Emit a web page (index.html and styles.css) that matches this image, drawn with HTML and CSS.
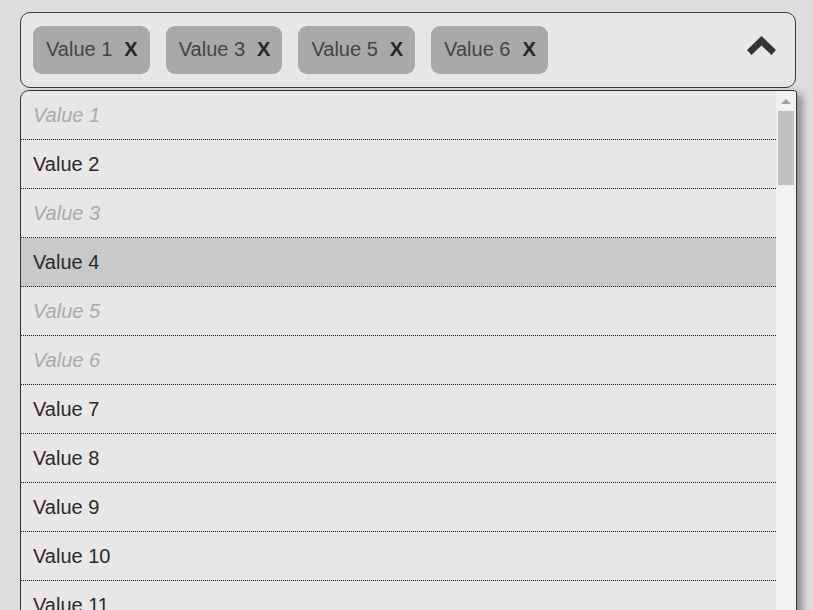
FILE: index.html
```html
<!DOCTYPE html>
<html lang="en">
<head>
<meta charset="utf-8">
<title>Multi select</title>
<link rel="stylesheet" href="styles.css">
</head>
<body>
<div class="page">
  <div class="select-box">
    <div class="chips">
      <span class="chip"><span class="chip-label">Value 1</span><span class="chip-x">X</span></span>
      <span class="chip"><span class="chip-label">Value 3</span><span class="chip-x">X</span></span>
      <span class="chip"><span class="chip-label">Value 5</span><span class="chip-x">X</span></span>
      <span class="chip"><span class="chip-label">Value 6</span><span class="chip-x">X</span></span>
    </div>
    <svg class="chevron" width="29" height="19" viewBox="0 0 29 19" aria-hidden="true">
      <polygon points="0,14 14.5,0 29,14 24.5,19 14.5,9.5 4.5,19" fill="#333"/>
    </svg>
  </div>
  <div class="dropdown">
    <ul class="options">
      <li class="option disabled">Value 1</li>
      <li class="option">Value 2</li>
      <li class="option disabled">Value 3</li>
      <li class="option active">Value 4</li>
      <li class="option disabled">Value 5</li>
      <li class="option disabled">Value 6</li>
      <li class="option">Value 7</li>
      <li class="option">Value 8</li>
      <li class="option">Value 9</li>
      <li class="option">Value 10</li>
      <li class="option">Value 11</li>
      <li class="option">Value 12</li>
    </ul>
    <div class="scrollbar">
      <div class="scroll-btn"><span class="scroll-arrow"></span></div>
      <div class="scroll-thumb"></div>
    </div>
  </div>
</div>
</body>
</html>
```
FILE: styles.css
```css
html, body {
  margin: 0;
  padding: 0;
  height: 100%;
  overflow: hidden;
  background: #dedede;
  font-family: "Liberation Sans", Arial, sans-serif;
}
.page {
  padding: 12px 0 0 20px;
  width: 777px;
}
.select-box {
  box-sizing: border-box;
  width: 776px;
  height: 76px;
  border: 1px solid #3a3a3a;
  border-radius: 10px;
  background: #e8e6e7;
  display: flex;
  align-items: center;
  justify-content: space-between;
  padding: 0 19px 0 12px;
}
.chips {
  display: flex;
  gap: 16px;
  margin-top: -1px;
}
.chip {
  display: flex;
  align-items: center;
  height: 48px;
  padding: 0 12px 0 13px;
  gap: 12px;
  background: #a9a9a9;
  border-radius: 9px;
  font-size: 20px;
  color: #444;
}
.chip-x {
  font-weight: bold;
  color: #262626;
}
.chevron {
  display: block;
  margin-top: -9px;
}
.dropdown {
  box-sizing: border-box;
  margin-top: 2px;
  width: 777px;
  height: 560px;
  border: 1px solid #333;
  border-bottom: none;
  border-radius: 9px 4px 0 0;
  background: #e8e6e7;
  display: flex;
  overflow: hidden;
  box-shadow: 7px 2px 8px -2px rgba(0,0,0,0.4);
}
.options {
  list-style: none;
  margin: 0;
  padding: 0;
  flex: 1;
}
.option {
  height: 48px;
  line-height: 48px;
  padding-left: 12px;
  border-bottom: 1px dotted #222;
  font-size: 20px;
  color: #2a2a2a;
}
.option.disabled {
  font-style: italic;
  color: #aaa;
}
.option.active {
  background: #c9c9c9;
}
.scrollbar {
  width: 20px;
  background: #f1f1f1;
  display: flex;
  flex-direction: column;
  align-items: center;
}
.scroll-btn {
  height: 20px;
  width: 100%;
  display: flex;
  justify-content: center;
  align-items: center;
}
.scroll-arrow {
  width: 0;
  height: 0;
  border-left: 5px solid transparent;
  border-right: 5px solid transparent;
  border-bottom: 5px solid #a3a3a3;
}
.scroll-thumb {
  width: 16px;
  height: 74px;
  background: #c1c1c1;
}
```
